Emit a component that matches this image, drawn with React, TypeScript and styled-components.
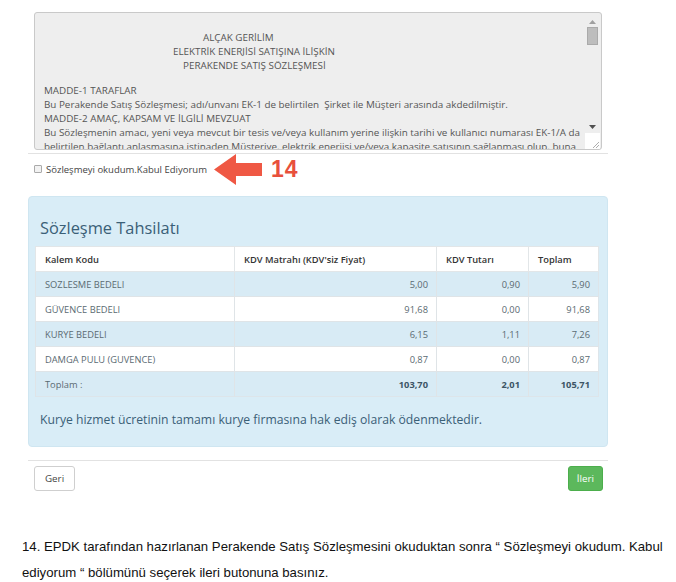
import React from "react";
import styled, { createGlobalStyle } from "styled-components";

const GlobalStyle = createGlobalStyle`
  html, body {
    margin: 0;
    padding: 0;
    background: #fff;
  }
  body {
    font-family: "Open Sans", "DejaVu Sans", sans-serif;
    color: #555;
  }
`;

const Page = styled.div`
  width: 676px;
  height: 582px;
  overflow: hidden;
  box-sizing: border-box;
  padding-top: 12px;
`;

const Form = styled.div`
  margin-left: 28px;
  width: 580px;
  display: flex;
  flex-direction: column;
`;

const ContractBox = styled.div`
  margin: 0 6px;
  height: 138px;
  box-sizing: border-box;
  border: 1px solid #c9c9c9;
  border-radius: 3px;
  background: #eeeeee;
  display: flex;
  overflow: hidden;
`;

const ContractText = styled.div`
  flex: 1;
  padding: 18px 0 0 9px;
  font-size: 9.85px;
  line-height: 13.8px;
  color: #555;
  white-space: nowrap;
  overflow: hidden;
`;

const CenterLine = styled.div<{ $offset: number }>`
  padding-left: ${(p) => p.$offset}px;
`;

const Blank = styled.div`
  height: 12px;
`;

const Scrollbar = styled.div`
  width: 17px;
  display: flex;
  flex-direction: column;
  align-items: center;
  padding-top: 7px;
`;

const Thumb = styled.div`
  width: 11px;
  height: 18px;
  margin-top: 3px;
  background: #bdbdbd;
  border: 1px solid #aaa;
  box-sizing: border-box;
`;

const Track = styled.div`
  flex: 1;
`;

const Grip = styled.div`
  width: 15px;
  height: 16px;
  margin-top: 4px;
  background: #fff;
  display: flex;
  align-items: flex-end;
  justify-content: flex-end;
`;

const Rule = styled.hr`
  margin: 3px 0 0;
  border: 0;
  border-top: 1px solid #e2e2e2;
`;

const AcceptRow = styled.div`
  display: flex;
  align-items: center;
  height: 30px;
  padding-left: 6px;
  gap: 4px;
`;

const Check = styled.span`
  width: 6px;
  height: 6px;
  border: 1px solid #aaa;
  border-radius: 1px;
  background: #f2f2f2;
`;

const AcceptLabel = styled.span`
  font-size: 9.5px;
  color: #444;
`;

const Callout = styled.div`
  display: flex;
  align-items: center;
  margin-left: 3px;
  gap: 9px;
`;

const StepNumber = styled.span`
  font-family: "Liberation Sans", Arial, sans-serif;
  font-weight: bold;
  font-size: 23px;
  color: #e8503c;
  letter-spacing: 1px;
`;

const InfoPanel = styled.div`
  margin-top: 12px;
  background: #d9edf7;
  border: 1px solid #cfe6f1;
  border-radius: 4px;
  padding: 20px 8px 18px 6px;
`;

const PanelTitle = styled.div`
  font-size: 16.4px;
  color: #3b6077;
  padding-left: 5px;
  line-height: 22px;
  margin-bottom: 7px;
`;

const Table = styled.table`
  width: 100%;
  border-collapse: collapse;
  border: 1px solid #dde5ea;
  font-size: 9.3px;
`;

const HeadCell = styled.th`
  background: #fff;
  text-align: left;
  font-weight: 600;
  color: #333;
  padding: 0 9px;
  height: 24px;
  border: 1px solid #e2e6e8;
`;

const Row = styled.tr<{ $striped: boolean }>`
  background: ${(p) => (p.$striped ? "#d8ebf5" : "#fff")};
`;

const Cell = styled.td<{ $num?: boolean; $bold?: boolean }>`
  height: 24px;
  padding: 0 8px 0 9px;
  color: #5a6a72;
  text-align: ${(p) => (p.$num ? "right" : "left")};
  font-weight: ${(p) => (p.$bold ? 700 : 400)};
  border-left: 1px solid #dfe4e7;
  border-top: 1px solid #dfe4e7;
  ${(p) => p.$bold && "color: #3d5565;"}
`;

const Note = styled.div`
  margin-top: 14px;
  padding-left: 5px;
  font-size: 12.2px;
  color: #3b6077;
`;

const Footer = styled.div`
  margin-top: 13px;
  border-top: 1px solid #e2e2e2;
  display: flex;
  justify-content: space-between;
  padding: 5px 5px 0 6px;
`;

const Button = styled.button<{ $primary?: boolean }>`
  font-family: "Open Sans", sans-serif;
  font-size: 9.8px;
  height: 25px;
  padding: 0 ${(p) => (p.$primary ? 8 : 10)}px;
  border-radius: 3px;
  border: 1px solid ${(p) => (p.$primary ? "#4cae4c" : "#cfcfcf")};
  background: ${(p) => (p.$primary ? "#5cb85c" : "#fff")};
  color: ${(p) => (p.$primary ? "#fff" : "#444")};
`;

const Caption = styled.div`
  margin: 43px 0 0 22px;
  font-family: "Liberation Sans", Arial, sans-serif;
  font-size: 13.2px;
  line-height: 26px;
  color: #111;
`;

const rows = [
  { name: "SOZLESME BEDELI", base: "5,00", vat: "0,90", total: "5,90" },
  { name: "GÜVENCE BEDELI", base: "91,68", vat: "0,00", total: "91,68" },
  { name: "KURYE BEDELI", base: "6,15", vat: "1,11", total: "7,26" },
  { name: "DAMGA PULU (GUVENCE)", base: "0,87", vat: "0,00", total: "0,87" }
];

const Arrow = () => (
  <svg width="48" height="31" viewBox="0 0 48 31">
    <path d="M0 15.5 L22 0 L22 9 L48 9 L48 22 L22 22 L22 31 Z" fill="#ef5844" />
  </svg>
);

const App = () => (
  <>
    <GlobalStyle />
    <Page>
      <Form>
        <ContractBox>
          <ContractText>
            <CenterLine $offset={159}>ALÇAK GERİLİM</CenterLine>
            <CenterLine $offset={129}>ELEKTRİK ENERJİSİ SATIŞINA İLİŞKİN</CenterLine>
            <CenterLine $offset={139}>PERAKENDE SATIŞ SÖZLEŞMESİ</CenterLine>
            <Blank />
            <div>MADDE-1 TARAFLAR</div>
            <div>Bu Perakende Satış Sözleşmesi; adı/unvanı EK-1 de belirtilen&nbsp; Şirket ile Müşteri arasında akdedilmiştir.</div>
            <div>MADDE-2 AMAÇ, KAPSAM VE İLGİLİ MEVZUAT</div>
            <div>
              Bu Sözleşmenin amacı, yeni veya mevcut bir tesis ve/veya kullanım yerine ilişkin tarihi ve kullanıcı numarası EK-1/A da
            </div>
            <div>
              belirtilen bağlantı anlaşmasına istinaden Müşteriye, elektrik enerjisi ve/veya kapasite satışının sağlanması olup, buna
            </div>
          </ContractText>
          <Scrollbar>
            <svg width="7" height="4" viewBox="0 0 7 4">
              <path d="M0 4 L3.5 0 L7 4 Z" fill="#a0a0a0" />
            </svg>
            <Thumb />
            <Track />
            <svg width="7" height="4" viewBox="0 0 7 4">
              <path d="M0 0 L3.5 4 L7 0 Z" fill="#505050" />
            </svg>
            <Grip>
              <svg width="8" height="8" viewBox="0 0 8 8">
                <path d="M1 7 L7 1 M4 7 L7 4" stroke="#999" strokeWidth="0.8" />
              </svg>
            </Grip>
          </Scrollbar>
        </ContractBox>
        <Rule />
        <AcceptRow>
          <Check />
          <AcceptLabel>Sözleşmeyi okudum.Kabul Ediyorum</AcceptLabel>
          <Callout>
            <Arrow />
            <StepNumber>14</StepNumber>
          </Callout>
        </AcceptRow>
        <InfoPanel>
          <PanelTitle>Sözleşme Tahsilatı</PanelTitle>
          <Table>
            <colgroup>
              <col style={{ width: 199 }} />
              <col style={{ width: 202 }} />
              <col style={{ width: 92 }} />
              <col />
            </colgroup>
            <thead>
              <tr>
                <HeadCell>Kalem Kodu</HeadCell>
                <HeadCell>KDV Matrahı (KDV'siz Fiyat)</HeadCell>
                <HeadCell>KDV Tutarı</HeadCell>
                <HeadCell>Toplam</HeadCell>
              </tr>
            </thead>
            <tbody>
              {rows.map((r, i) => (
                <Row key={r.name} $striped={i % 2 === 0}>
                  <Cell>{r.name}</Cell>
                  <Cell $num>{r.base}</Cell>
                  <Cell $num>{r.vat}</Cell>
                  <Cell $num>{r.total}</Cell>
                </Row>
              ))}
              <Row $striped>
                <Cell>Toplam :</Cell>
                <Cell $num $bold>103,70</Cell>
                <Cell $num $bold>2,01</Cell>
                <Cell $num $bold>105,71</Cell>
              </Row>
            </tbody>
          </Table>
          <Note>Kurye hizmet ücretinin tamamı kurye firmasına hak ediş olarak ödenmektedir.</Note>
        </InfoPanel>
        <Footer>
          <Button>Geri</Button>
          <Button $primary>İleri</Button>
        </Footer>
      </Form>
      <Caption>
        <div>
          14. EPDK tarafından hazırlanan Perakende Satış Sözleşmesini okuduktan sonra “ Sözleşmeyi okudum. Kabul
        </div>
        <div>ediyorum “ bölümünü seçerek ileri butonuna basınız.</div>
      </Caption>
    </Page>
  </>
);

export default App;
